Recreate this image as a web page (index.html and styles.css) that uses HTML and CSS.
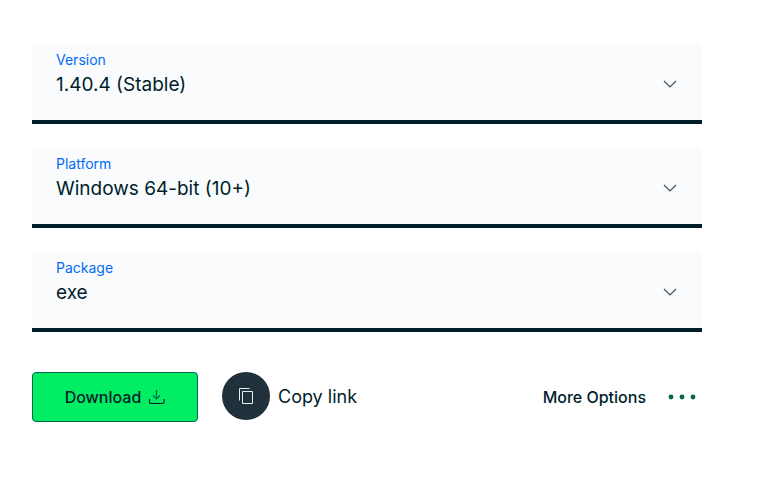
FILE: index.html
```html
<!DOCTYPE html>
<html lang="en">
<head>
  <meta charset="UTF-8" />
  <meta name="viewport" content="width=device-width, initial-scale=1.0"/>
  <title>Download</title>
  <link rel="stylesheet" href="styles.css">
</head>
<body>

  <form class="download-form">
    <div class="field">
      <label for="version">Version</label>
      <select id="version">
        <option>1.40.4 (Stable)</option>
      </select>
      <svg class="chevron" viewBox="0 0 14 8"><path d="M1 1l6 6 6-6"/></svg>
    </div>
    <div class="field">
      <label for="platform">Platform</label>
      <select id="platform">
        <option>Windows 64-bit (10+)</option>
      </select>
      <svg class="chevron" viewBox="0 0 14 8"><path d="M1 1l6 6 6-6"/></svg>
    </div>
    <div class="field">
      <label for="package">Package</label>
      <select id="package">
        <option>exe</option>
      </select>
      <svg class="chevron" viewBox="0 0 14 8"><path d="M1 1l6 6 6-6"/></svg>
    </div>

    <!-- Actions -->
    <div class="actions">
      <button type="button" class="download-btn">
        Download
        <svg class="download-icon" viewBox="0 0 16 16">
          <path class="arrow" d="M7.5 1v9M4 6.5L7.5 10 11 6.5"/>
          <path d="M.5 10v3q0 1.5 1.5 1.5h11.500q1.500 0 1.500-1.500v-3"/>
        </svg>
      </button>
      <button type="button" class="copy-btn">
        <span class="copy-circle">
          <svg class="copy-icon" viewBox="0 0 16 16">
            <path d="M4.500 3.500h10v12h-10zM1.500 12.500v-12h10"/>
          </svg>
        </span>
        Copy link
      </button>
      <button type="button" class="more-btn">
        More Options
        <svg class="dots" viewBox="0 0 28 6">
          <circle cx="3" cy="3" r="2.400"/>
          <circle cx="14" cy="3" r="2.400"/>
          <circle cx="25" cy="3" r="2.400"/>
        </svg>
      </button>
    </div>
  </form>

</body>
</html>
```
FILE: styles.css
```css
* {
  margin: 0;
  padding: 0;
  box-sizing: border-box;
}
body {
  background-color: #fff;
  color: #001e2b;
  font-family: Inter, sans-serif;
}
.download-form {
  display: flex;
  flex-direction: column;
  gap: 24px;
  padding: 44px 59px 44px 32px;
}
.field {
  position: relative;
}
label {
  position: absolute;
  top: 6px;
  left: 24px;
  color: #016bf8;
  font-size: 14px;
  line-height: 20px;
}
select {
  display: block;
  width: 100%;
  height: 80px;
  padding: 6px 60px 0 24px;
  appearance: none;
  background-color: #f9fbfd;
  border: none;
  border-bottom: 4px solid #001e2b;
  border-radius: 4px 4px 0 0;
  color: #001e2b;
  font-family: inherit;
  font-size: 19px;
  line-height: 28px;
}
.chevron {
  position: absolute;
  top: 36px;
  right: 25px;
  width: 14px;
  height: 8px;
  fill: none;
  stroke: #3d4f58;
  stroke-width: 1.2;
  pointer-events: none;
}
.actions {
  display: flex;
  align-items: flex-start;
  margin-top: 16px;
}
button {
  display: flex;
  align-items: center;
  background: none;
  border: none;
  color: #001e2b;
  font-family: inherit;
  font-size: 16px;
  cursor: pointer;
}
.download-btn {
  justify-content: center;
  gap: 8px;
  width: 166px;
  height: 50px;
  background-color: #00ed64;
  border: 1px solid #00684a;
  border-radius: 4px;
  font-weight: 500;
}
.download-icon {
  width: 16px;
  height: 16px;
  fill: none;
  stroke: #001e2b;
  stroke-width: 1.2;
}
.arrow {
  stroke: #00684a;
}
.copy-btn {
  gap: 8px;
  margin-left: 24px;
  font-size: 18px;
}
.copy-circle {
  display: flex;
  align-items: center;
  justify-content: center;
  width: 48px;
  height: 48px;
  border-radius: 50%;
  background-color: #21313c;
}
.copy-icon {
  width: 16px;
  height: 16px;
  fill: none;
  stroke: #e8edeb;
}
.more-btn {
  gap: 22px;
  height: 50px;
  margin-left: auto;
  padding-right: 6px;
  font-weight: 500;
}
.dots {
  width: 28px;
  height: 6px;
  fill: #00684a;
}
```
